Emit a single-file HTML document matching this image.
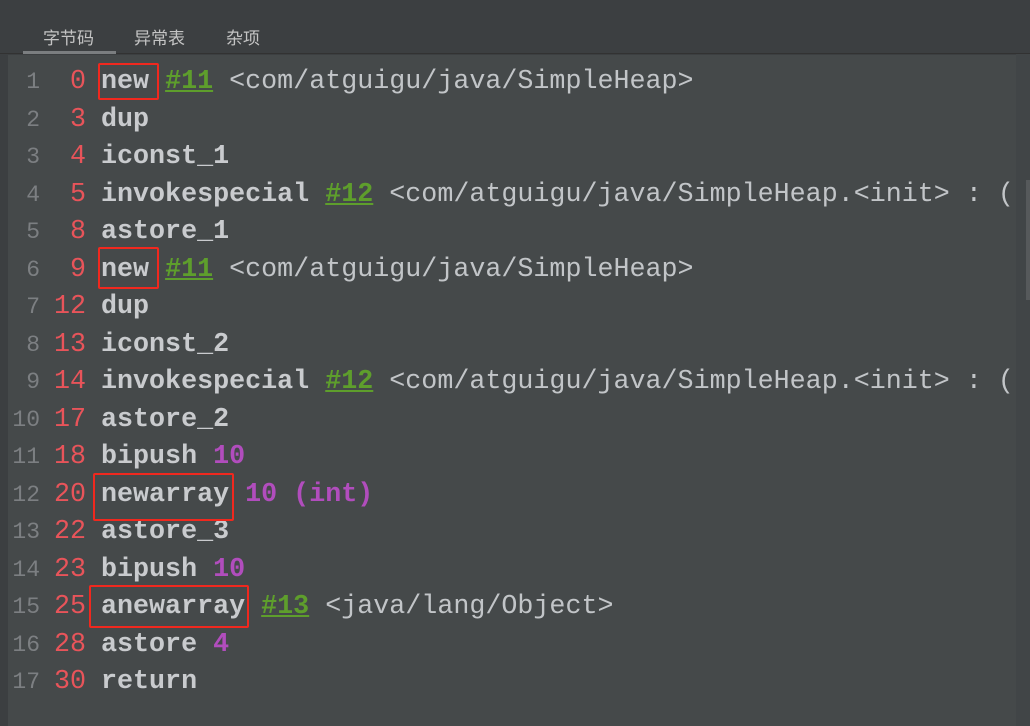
<!DOCTYPE html>
<html><head><meta charset="utf-8"><style>
body{margin:0;width:1030px;height:726px;background:#3c3f41;overflow:hidden;position:relative;font-family:"Liberation Mono",monospace}
.tabs{position:absolute;top:0;left:0;width:1030px;height:54px;background:#3c3f41;border-bottom:1px solid #323232;box-sizing:border-box}
.tab{position:absolute;top:24px;font:17px "Liberation Sans","Noto Sans CJK SC",sans-serif;color:#c4c4c4}
.ul{position:absolute;left:23px;top:51px;width:93px;height:3px;background:#7b7e80}
.ed{position:absolute;left:8px;top:55px;width:1008px;height:671px;background:#45494a;overflow:hidden}
.sb{position:absolute;left:1016px;top:54px;width:14px;height:672px;background:#414547}
.th{position:absolute;left:1026px;top:180px;width:4px;height:120px;background:#56595b}
.ln{position:absolute;left:0;width:1008px;height:37.5px;line-height:37.5px;white-space:pre;font-size:26.7px;color:#c2c5c8}
.n{position:absolute;right:976px;font-size:23px;color:#7c7f82}
.o{position:absolute;right:930px;color:#e8545a}
.c{position:absolute;left:93px}
b{font-weight:bold;color:#c9cbce}
.g{color:#5e9e2c;font-weight:bold;text-decoration:underline}
.p{color:#b14dbd;font-weight:bold}
.box{position:absolute;border:2px solid #f0281e;border-radius:2px}
</style></head><body>
<div class="tabs"></div>
<div class="tab" style="left:43px">字节码</div>
<div class="tab" style="left:134px">异常表</div>
<div class="tab" style="left:226px">杂项</div>
<div class="ul"></div>
<div class="ed">
<div class="ln" style="top:9px"><span class="n">1</span><span class="o">0</span><span class="c"><b>new</b> <span class="g">#11</span> &lt;com/atguigu/java/SimpleHeap&gt;</span></div>
<div class="ln" style="top:46.5px"><span class="n">2</span><span class="o">3</span><span class="c"><b>dup</b></span></div>
<div class="ln" style="top:84px"><span class="n">3</span><span class="o">4</span><span class="c"><b>iconst_1</b></span></div>
<div class="ln" style="top:121.5px"><span class="n">4</span><span class="o">5</span><span class="c"><b>invokespecial</b> <span class="g">#12</span> &lt;com/atguigu/java/SimpleHeap.&lt;init&gt; : (</span></div>
<div class="ln" style="top:159px"><span class="n">5</span><span class="o">8</span><span class="c"><b>astore_1</b></span></div>
<div class="ln" style="top:196.5px"><span class="n">6</span><span class="o">9</span><span class="c"><b>new</b> <span class="g">#11</span> &lt;com/atguigu/java/SimpleHeap&gt;</span></div>
<div class="ln" style="top:234px"><span class="n">7</span><span class="o">12</span><span class="c"><b>dup</b></span></div>
<div class="ln" style="top:271.5px"><span class="n">8</span><span class="o">13</span><span class="c"><b>iconst_2</b></span></div>
<div class="ln" style="top:309px"><span class="n">9</span><span class="o">14</span><span class="c"><b>invokespecial</b> <span class="g">#12</span> &lt;com/atguigu/java/SimpleHeap.&lt;init&gt; : (</span></div>
<div class="ln" style="top:346.5px"><span class="n">10</span><span class="o">17</span><span class="c"><b>astore_2</b></span></div>
<div class="ln" style="top:384px"><span class="n">11</span><span class="o">18</span><span class="c"><b>bipush</b> <span class="p">10</span></span></div>
<div class="ln" style="top:421.5px"><span class="n">12</span><span class="o">20</span><span class="c"><b>newarray</b> <span class="p">10 (int)</span></span></div>
<div class="ln" style="top:459px"><span class="n">13</span><span class="o">22</span><span class="c"><b>astore_3</b></span></div>
<div class="ln" style="top:496.5px"><span class="n">14</span><span class="o">23</span><span class="c"><b>bipush</b> <span class="p">10</span></span></div>
<div class="ln" style="top:534px"><span class="n">15</span><span class="o">25</span><span class="c"><b>anewarray</b> <span class="g">#13</span> &lt;java/lang/Object&gt;</span></div>
<div class="ln" style="top:571.5px"><span class="n">16</span><span class="o">28</span><span class="c"><b>astore</b> <span class="p">4</span></span></div>
<div class="ln" style="top:609px"><span class="n">17</span><span class="o">30</span><span class="c"><b>return</b></span></div>
</div>
<div class="sb"></div><div class="th"></div>
<div class="box" style="left:98px;top:63px;width:57px;height:33px"></div>
<div class="box" style="left:98px;top:247px;width:57px;height:38px"></div>
<div class="box" style="left:93px;top:473px;width:137px;height:44px"></div>
<div class="box" style="left:89px;top:585px;width:156px;height:39px"></div>
</body></html>
